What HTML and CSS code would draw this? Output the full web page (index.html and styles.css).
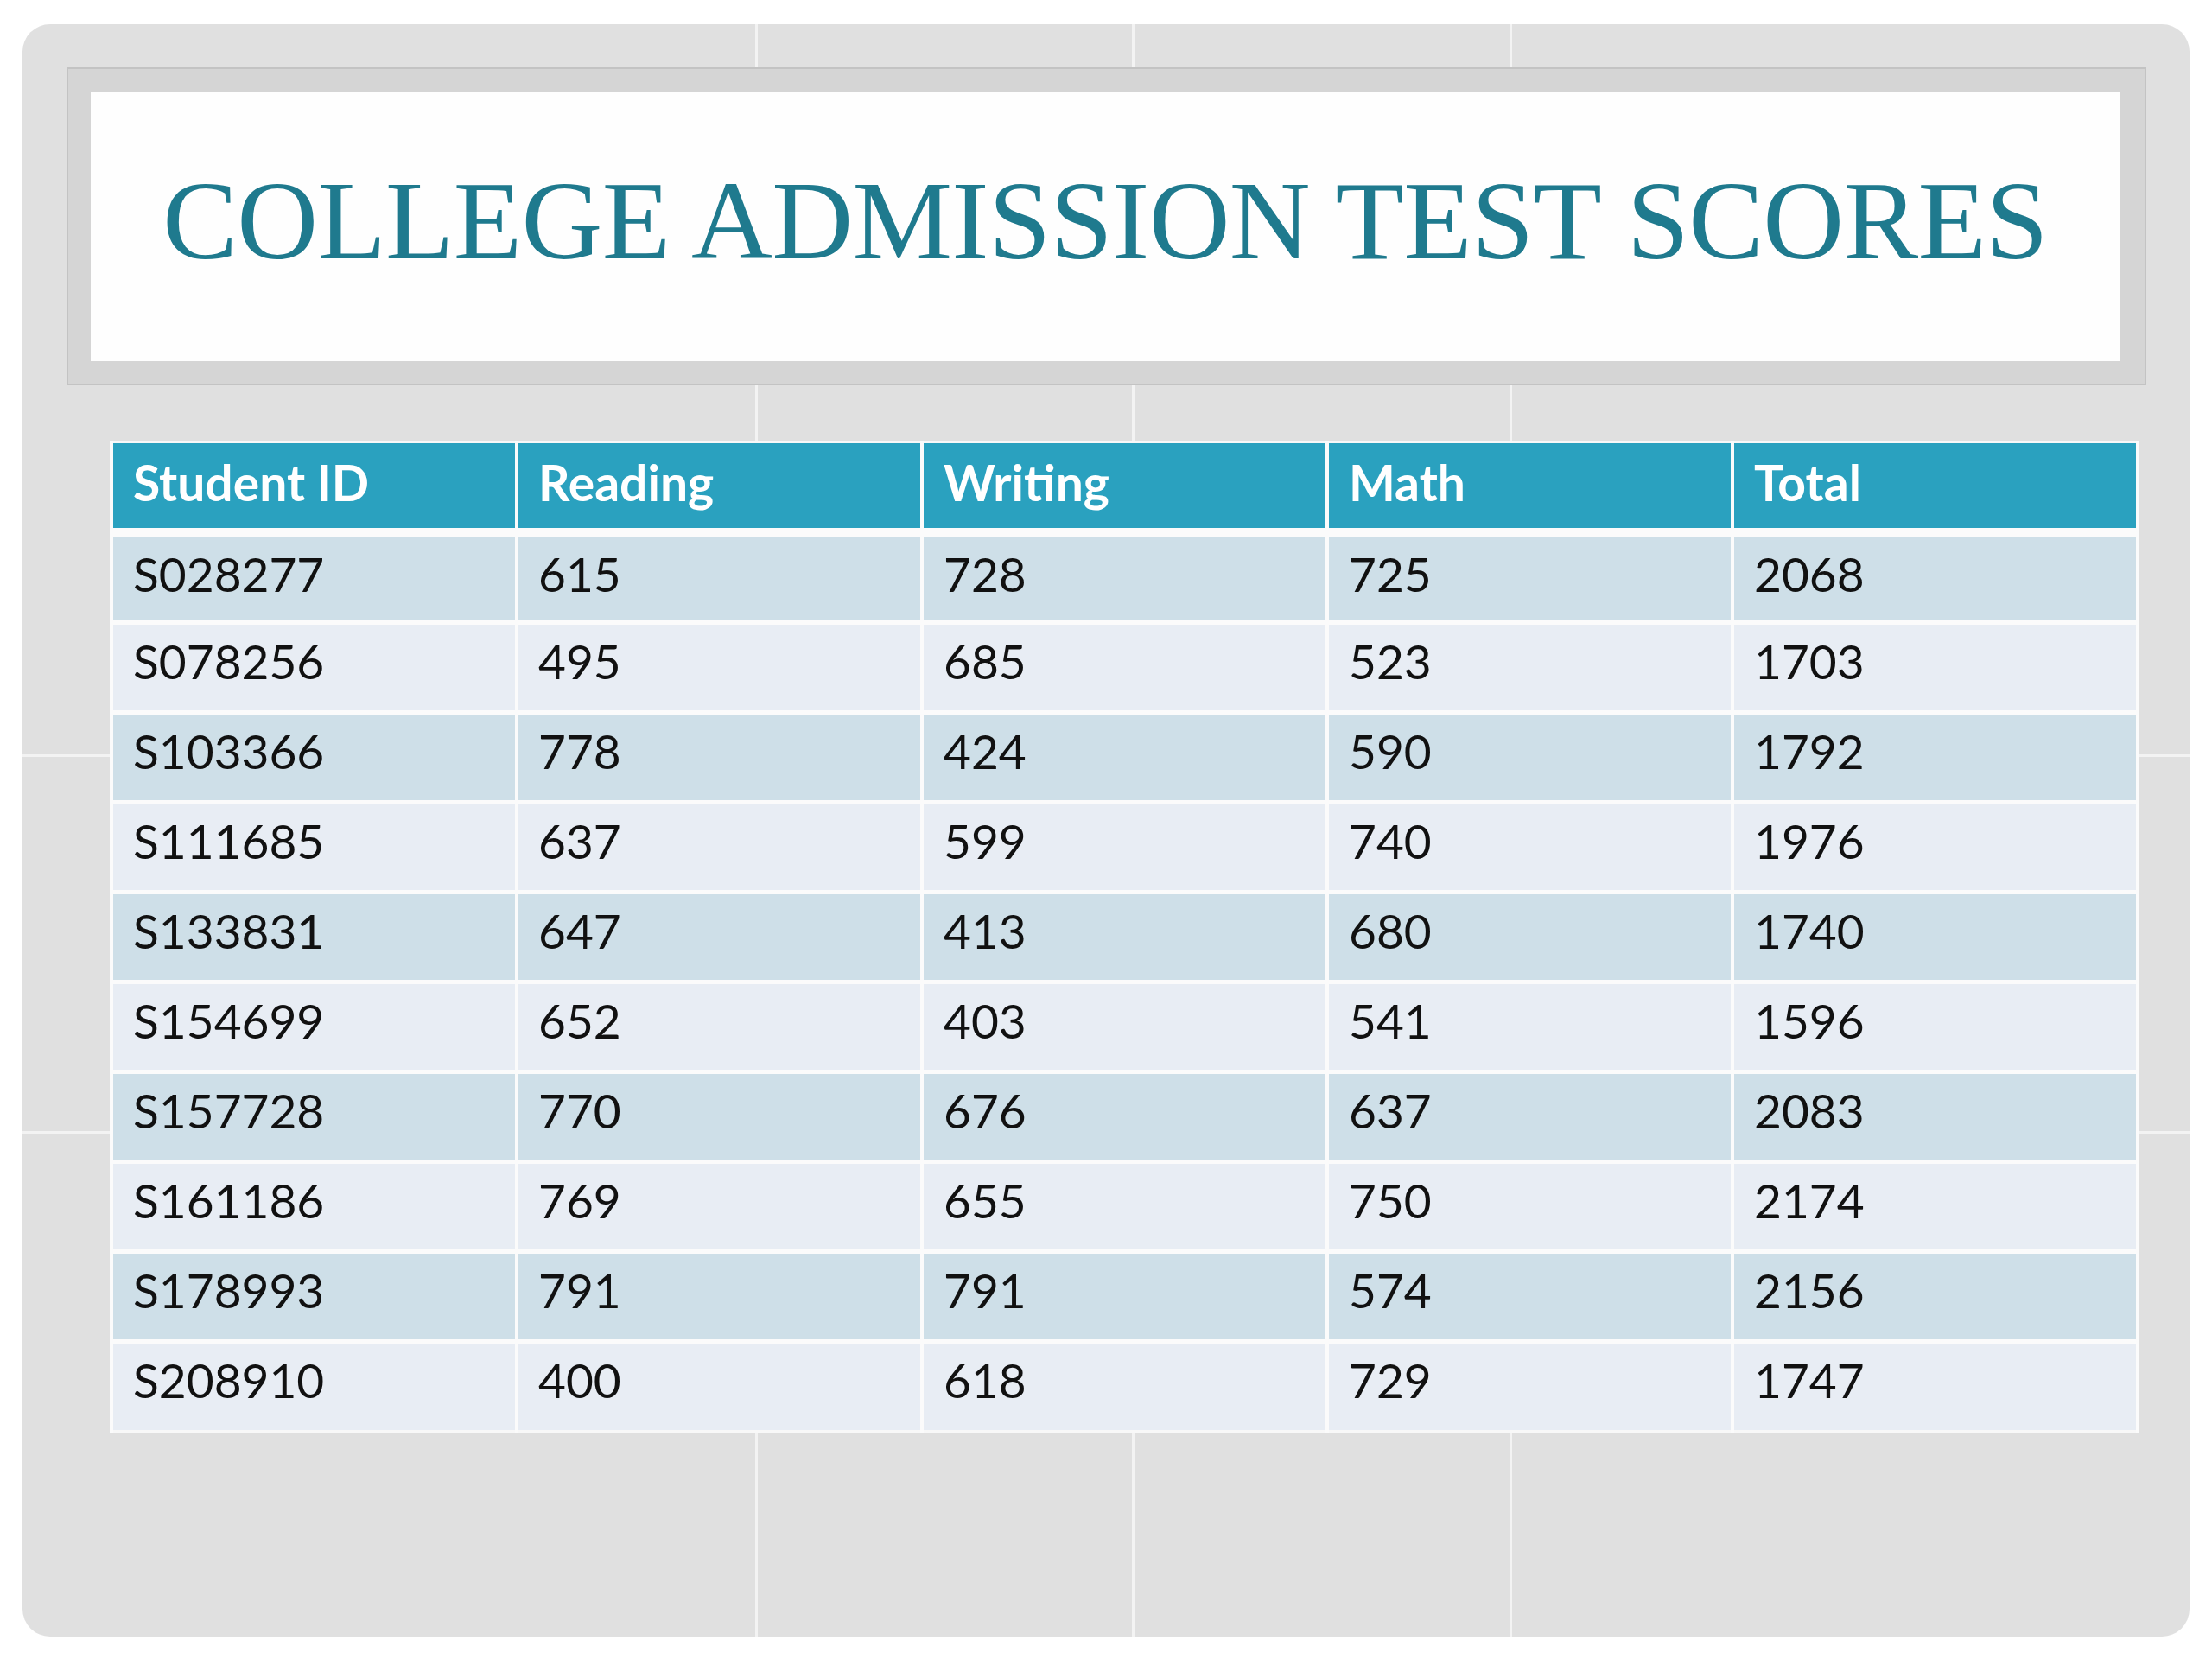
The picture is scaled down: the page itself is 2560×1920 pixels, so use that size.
FILE: index.html
```html
<!DOCTYPE html>
<html lang="en">
<head>
<meta charset="utf-8">
<title>College Admission Test Scores</title>
<link rel="stylesheet" href="styles.css">
</head>
<body>
<div class="slide">
  <div class="title-frame">
    <div class="title-box">
      <h1 class="title">COLLEGE ADMISSION TEST SCORES</h1>
    </div>
  </div>
  <table class="scores">
    <thead>
      <tr><th>Student ID</th><th>Reading</th><th>Writing</th><th>Math</th><th>Total</th></tr>
    </thead>
    <tbody>
      <tr><td>S028277</td><td>615</td><td>728</td><td>725</td><td>2068</td></tr>
      <tr><td>S078256</td><td>495</td><td>685</td><td>523</td><td>1703</td></tr>
      <tr><td>S103366</td><td>778</td><td>424</td><td>590</td><td>1792</td></tr>
      <tr><td>S111685</td><td>637</td><td>599</td><td>740</td><td>1976</td></tr>
      <tr><td>S133831</td><td>647</td><td>413</td><td>680</td><td>1740</td></tr>
      <tr><td>S154699</td><td>652</td><td>403</td><td>541</td><td>1596</td></tr>
      <tr><td>S157728</td><td>770</td><td>676</td><td>637</td><td>2083</td></tr>
      <tr><td>S161186</td><td>769</td><td>655</td><td>750</td><td>2174</td></tr>
      <tr><td>S178993</td><td>791</td><td>791</td><td>574</td><td>2156</td></tr>
      <tr><td>S208910</td><td>400</td><td>618</td><td>729</td><td>1747</td></tr>
    </tbody>
  </table>
</div>
</body>
</html>
```
FILE: styles.css
```css
html, body {
  margin: 0;
  padding: 0;
  background: #ffffff;
}

body {
  width: 2560px;
  height: 1920px;
  overflow: hidden;
}

.slide {
  box-sizing: border-box;
  margin: 28px 26px 0 26px;
  width: 2508px;
  height: 1866px;
  border-radius: 32px;
  padding: 50px 50px 0 51px;
  background-color: #e0e0e0;
  background-image:
    linear-gradient(#f3f3f3, #f3f3f3),
    linear-gradient(#f3f3f3, #f3f3f3),
    linear-gradient(#f3f3f3, #f3f3f3),
    linear-gradient(#f3f3f3, #f3f3f3),
    linear-gradient(#f3f3f3, #f3f3f3);
  background-repeat: no-repeat;
  background-size: 3px 100%, 3px 100%, 3px 100%, 100% 3px, 100% 3px;
  background-position: 848px 0, 1284px 0, 1721px 0, 0 845px, 0 1281px;
}

.title-frame {
  box-sizing: border-box;
  height: 368px;
  background: #d5d5d5;
  border: 2px solid #c3c3c3;
  padding: 26px 29px 26px 26px;
}

.title-box {
  height: 100%;
  background: #fefefe;
  display: flex;
  align-items: center;
  justify-content: center;
}

.title {
  margin: 0 0 14px 0;
  font-family: "Liberation Serif", "Times New Roman", serif;
  font-weight: normal;
  font-size: 130px;
  letter-spacing: -0.7px;
  line-height: 1;
  color: #1f7a8e;
}

.scores {
  margin: 64px 0 0 50px;
  width: 2349px;
  border-collapse: collapse;
  table-layout: fixed;
  font-family: Lato, "Noto Sans", sans-serif;
  border: 3px solid #f8f8f8;
}

.scores th,
.scores td {
  text-align: left;
  vertical-align: top;
  padding: 0 0 0 23px;
  border-left: 4px solid #fbfbfb;
  border-right: 4px solid #fbfbfb;
  line-height: 56px;
  box-sizing: border-box;
}

.scores th {
  background: #2aa1bf;
  color: #ffffff;
  font-weight: bold;
  font-size: 57px;
  height: 105px;
  padding-top: 17px;
  border-bottom: 11px solid #fbfbfb;
}

.scores td {
  font-size: 55px;
  color: #111111;
  height: 104px;
  padding-top: 14px;
  border-bottom: 5px solid #fbfbfb;
}

.scores tbody tr:nth-child(odd) td {
  background: #cedfe8;
}

.scores tbody tr:nth-child(even) td {
  background: #e8edf4;
}

.scores tbody tr:last-child td {
  border-bottom: 3px solid #f8f8f8;
}
```
